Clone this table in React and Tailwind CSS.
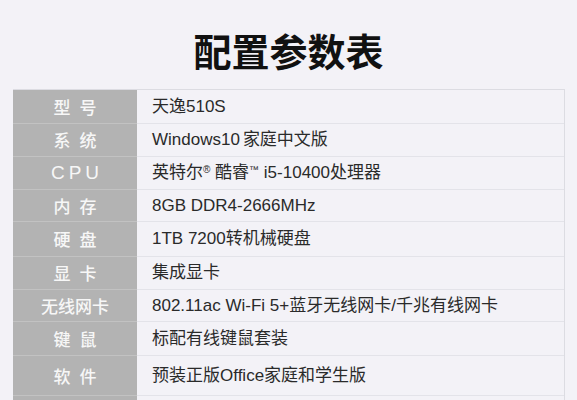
import React from "react";

const rows = [
  { label: "型号", value: "天逸510S", h: "h-[34px]", wide: true },
  { label: "系统", value: "win", h: "h-[33px]", wide: true },
  { label: "CPU", value: "cpu", h: "h-[33px]", cpu: true },
  { label: "内存", value: "8GB DDR4-2666MHz", h: "h-[32px]", wide: true },
  { label: "硬盘", value: "1TB 7200转机械硬盘", h: "h-[35px]", wide: true },
  { label: "显卡", value: "集成显卡", h: "h-[33px]", wide: true },
  { label: "无线网卡", value: "802.11ac Wi-Fi 5+蓝牙无线网卡/千兆有线网卡", h: "h-[32px]" },
  { label: "键鼠", value: "标配有线键鼠套装", h: "h-[34px]", wide: true },
  { label: "软件", value: "预装正版Office家庭和学生版", h: "h-[40px]", wide: true },
  { label: "", value: "", h: "h-[30px]" },
];

export default function App() {
  return (
    <div
      className="w-[577px] h-[400px] overflow-hidden bg-[#f3f2f7]"
      style={{ fontFamily: '"Liberation Sans", "Noto Sans CJK SC", sans-serif' }}
    >
      <div className="h-[89px] flex items-center justify-center pt-[10px]">
        <h1
          className="text-[38px] font-bold text-[#111] leading-none"
          style={{ fontFamily: '"Noto Sans CJK SC", sans-serif' }}
        >
          配置参数表
        </h1>
      </div>
      <div className="ml-[13px] w-[552px] border-t border-r border-[#dcdce2]">
        {rows.map((r, i) => (
          <div key={i} className={`flex ${r.h} border-b border-[#e3e3e9]`}>
            <div
              className="w-[124px] shrink-0 bg-[#b3b3b3] border-b border-[#c2c2c2] -mb-px flex items-center justify-center text-[17px] font-medium text-[#f7f7f7]"
              style={{ fontFamily: '"Noto Sans CJK SC", sans-serif' }}
            >
              {r.wide ? (
                <span className="tracking-[9px] pl-[9px]">{r.label}</span>
              ) : r.cpu ? (
                <span className="text-[19px] tracking-[4px] pl-[4px]" style={{ fontFamily: '"Liberation Sans", sans-serif' }}>{r.label}</span>
              ) : (
                <span>{r.label}</span>
              )}
            </div>
            <div className="flex-1 flex items-center pl-[15px] text-[17px] text-[#2a2a2a]">
              {r.cpu ? (
                <span>
                  英特尔<sup className="text-[10px]">®</sup> 酷睿<sup className="text-[10px]">™</sup> i5-10400处理器
                </span>
              ) : r.value === "win" ? (
                <span>
                  Windows10<span className="ml-[3px]">家庭中文版</span>
                </span>
              ) : (
                <span>{r.value}</span>
              )}
            </div>
          </div>
        ))}
      </div>
    </div>
  );
}
